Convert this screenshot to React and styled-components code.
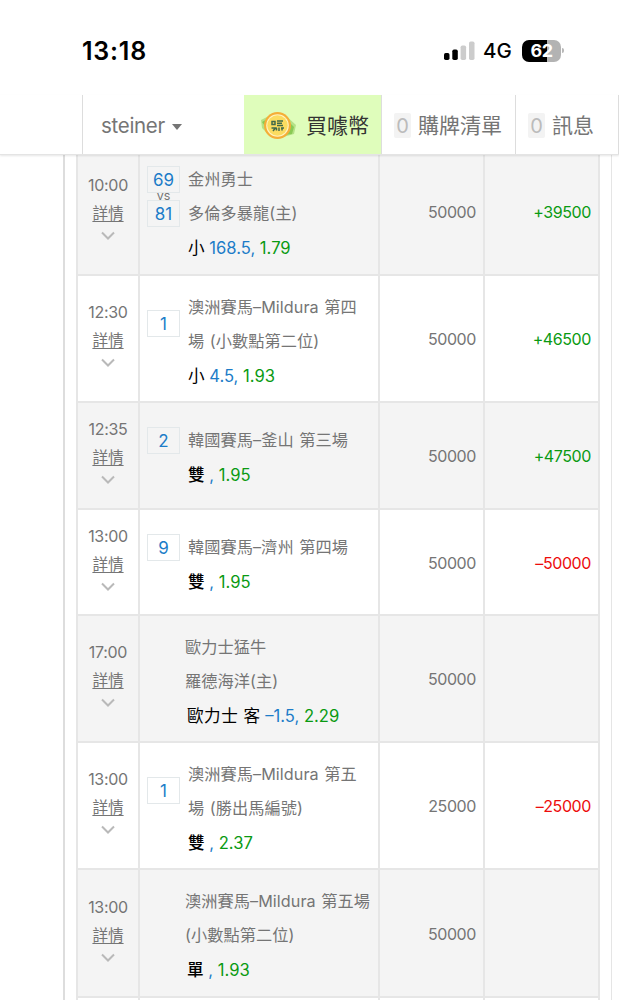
import React from "react";
import styled, { createGlobalStyle } from "styled-components";

const Global = createGlobalStyle`
  * { box-sizing: border-box; }
  body { margin: 0; background: #fff; overflow: hidden; }
`;

const Screen = styled.div`
  display: flex;
  flex-direction: column;
  width: 619px;
  height: 1000px;
  overflow: hidden;
  background: #fff;
  color: #757575;
  font-family: Inter, "Noto Sans CJK TC", sans-serif;
  font-weight: 370;
`;

const StatusBar = styled.div`
  display: flex;
  flex: none;
  align-items: center;
  height: 95px;
  padding: 6px 55px 0 82px;
  color: #000;
`;

const Clock = styled.div`
  flex: 1;
  font-size: 25px;
  font-weight: 600;
  line-height: 30px;
  letter-spacing: 0.8px;
`;

const Signal = styled.svg`
  width: 31px;
  height: 20px;
  margin-right: 8px;
`;

const Network = styled.div`
  width: 39px;
  font-size: 20.5px;
  font-weight: 500;
  line-height: 30px;
`;

const Battery = styled.div`
  width: 39px;
  height: 22px;
  border-radius: 7px;
  background: linear-gradient(90deg, #000 64%, #b3b3b3 64%);
  color: #fff;
  font-size: 18px;
  font-weight: 700;
  line-height: 22px;
  text-align: center;
  letter-spacing: -0.5px;
`;

const BatteryCap = styled.div`
  width: 2px;
  height: 5px;
  margin-left: 1px;
  border-radius: 0 2px 2px 0;
  background: #b8b8b8;
`;

const Nav = styled.nav`
  position: relative;
  z-index: 1;
  display: flex;
  flex: none;
  height: 60px;
  padding-left: 82px;
  background: #fff;
  border-bottom: 1px solid #e4e4e4;
  box-shadow: 0 1px 2px rgba(0, 0, 0, 0.1);
  font-size: 21px;
`;

const NavItem = styled.div`
  display: flex;
  flex: none;
  align-items: center;
  width: ${(p) => p.$width}px;
  padding: 2px 0 0 ${(p) => p.$pad}px;
  border-left: ${(p) => (p.$highlight ? "0" : "1px solid #ddd")};
  background: ${(p) => (p.$highlight ? "#dffdbb" : "#fff")};
  color: ${(p) => (p.$highlight ? "#333" : "#757575")};
  line-height: 30px;
  white-space: nowrap;
`;

const User = styled.span`
  font-size: 20.5px;
  letter-spacing: -0.3px;
`;

const Caret = styled.span`
  margin: 2px 0 0 7px;
  border: 5.5px solid transparent;
  border-top: 6px solid #757575;
  border-bottom: 0;
`;

const Coin = styled.svg`
  width: 38px;
  height: 34px;
  margin-right: 9px;
`;

const Count = styled.span`
  width: 17px;
  height: 25px;
  margin-right: 7px;
  border-radius: 2px;
  background: #f3f3f3;
  color: #bbb;
  font-size: 20px;
  line-height: 27px;
  text-align: center;
`;

const NavEdge = styled.div`
  width: 1px;
  margin-left: auto;
  background: #ddd;
`;

const Page = styled.main`
  flex: none;
  width: 549px;
  margin: -7px 0 0 63px;
  padding-left: 11px;
  border-left: 2px solid #ddd;
  border-right: 1px solid #e5e5e5;
`;

const Table = styled.div`
  width: 524px;
  border-left: 2px solid #e6e6e6;
`;

const Row = styled.div`
  display: grid;
  grid-template-columns: 62px 240px 105px 115px;
  height: ${(p) => p.$height}px;
  background: ${(p) => (p.$shaded ? "#f4f4f4" : "#fff")};
`;

const Cell = styled.div`
  min-width: 0;
  border-right: 2px solid #e6e6e6;
  border-bottom: 2px solid #e6e6e6;
  font-size: 16.2px;
`;

const TimeCell = styled(Cell)`
  display: flex;
  flex-direction: column;
  align-items: center;
  justify-content: center;
  padding-bottom: 10px;
`;

const Time = styled.div`
  height: 28px;
  font-size: 16px;
  line-height: 28px;
  letter-spacing: -0.3px;
`;

const Details = styled.a`
  height: 29px;
  font-size: 15.6px;
  line-height: 29px;
  text-decoration: underline;
  text-decoration-thickness: 1px;
  text-underline-offset: 2px;
`;

const Chevron = styled.svg`
  width: 14px;
  height: 9px;
  margin: 3px 0 2px;
`;

const EventCell = styled(Cell)`
  display: grid;
  grid-template-columns: ${(p) => (p.$scored ? "33px 1fr" : "1fr")};
  column-gap: 8px;
  align-content: start;
  padding: ${(p) => (p.$short ? 20 : 14)}px 0 0 ${(p) => (p.$scored ? 7 : 45)}px;
`;

const Scores = styled.div`
  display: flex;
  flex-direction: column;
  align-items: center;
  padding-top: ${(p) => p.$top}px;
`;

const Score = styled.div`
  width: 33px;
  height: 27px;
  border: 1px solid #e3e8ea;
  color: #1c7cc8;
  font-size: 17px;
  line-height: 26px;
  text-align: center;
`;

const Versus = styled.div`
  height: 7px;
  font-size: 12.5px;
  line-height: 6px;
`;

const Line = styled.div`
  height: 34px;
  font-size: 16.2px;
  line-height: 34px;
  word-spacing: 1px;
  letter-spacing: 0.06px;
  white-space: nowrap;
`;

const Bet = styled.div`
  height: 36px;
  margin-left: ${(p) => (p.$indent ? 2 : 0)}px;
  color: #0a9a12;
  font-size: 16.6px;
  line-height: 36px;
  white-space: pre;
`;

const Pick = styled.span`
  color: #000;
  font-weight: ${(p) => (p.$strong ? 500 : 370)};
  letter-spacing: ${(p) => (p.$wide ? 0.5 : 0)}px;
`;

const Handicap = styled.span`
  color: #1c7cc8;
`;

const MoneyCell = styled(Cell)`
  display: flex;
  align-items: center;
  justify-content: flex-end;
  padding: 1px 7px 0 0;
  color: ${(p) => p.$color || "#757575"};
  font-size: 16px;
  letter-spacing: -0.4px;
`;

const rows = [
  { h: 128, time: "10:00", scores: ["69", "81"], lines: ["金州勇士", "多倫多暴龍(主)"], pick: "小", line: " 168.5,", odds: "1.79", stake: "50000", result: "+39500" },
  { h: 127, time: "12:30", scores: ["1"], lines: ["澳洲賽馬–Mildura 第四", "場 (小數點第二位)"], pick: "小", line: " 4.5,", odds: "1.93", stake: "50000", result: "+46500" },
  { h: 107, time: "12:35", scores: ["2"], lines: ["韓國賽馬–釜山 第三場"], pick: "雙", strong: true, line: " ,", odds: "1.95", stake: "50000", result: "+47500" },
  { h: 106, time: "13:00", scores: ["9"], lines: ["韓國賽馬–濟州 第四場"], pick: "雙", strong: true, line: " ,", odds: "1.95", stake: "50000", result: "–50000" },
  { h: 127, time: "17:00", lines: ["歐力士猛牛", "羅德海洋(主)"], pick: "歐力士 客", line: " –1.5,", odds: "2.29", stake: "50000" },
  { h: 127, time: "13:00", scores: ["1"], lines: ["澳洲賽馬–Mildura 第五", "場 (勝出馬編號)"], pick: "雙", strong: true, line: " ,", odds: "2.37", stake: "25000", result: "–25000" },
  { h: 128, time: "13:00", lines: ["澳洲賽馬–Mildura 第五場", "(小數點第二位)"], pick: "單", strong: true, line: " ,", odds: "1.93", stake: "50000" },
  { h: 127 },
];

function ScoreColumn({ scores, short }) {
  if (scores.length === 2) {
    return (
      <Scores $top={4}>
        <Score>{scores[0]}</Score>
        <Versus>vs</Versus>
        <Score>{scores[1]}</Score>
      </Scores>
    );
  }
  return (
    <Scores $top={short ? 4 : 20}>
      <Score>{scores[0]}</Score>
    </Scores>
  );
}

function BetRow({ data, shaded }) {
  if (!data.time) {
    return <Row $height={data.h} $shaded={shaded}><Cell /><Cell /><Cell /><Cell /></Row>;
  }
  const short = data.lines.length === 1;
  const scored = !!data.scores;
  const won = data.result && data.result[0] === "+";
  return (
    <Row $height={data.h} $shaded={shaded}>
      <TimeCell>
        <Time>{data.time}</Time>
        <Details>詳情</Details>
        <Chevron viewBox="0 0 14 9" fill="none" stroke="#b9b9b9" strokeWidth="2">
          <path d="M1 1.5 7 7.5l6-6" />
        </Chevron>
      </TimeCell>
      <EventCell $scored={scored} $short={short}>
        {scored && <ScoreColumn scores={data.scores} short={short} />}
        <div>
          {data.lines.map((text) => <Line key={text}>{text}</Line>)}
          <Bet $indent={!scored}>
            <Pick $strong={data.strong} $wide={data.pick.length > 1}>{data.pick}</Pick>
            <Handicap>{data.line}</Handicap> {data.odds}
          </Bet>
        </div>
      </EventCell>
      <MoneyCell>{data.stake}</MoneyCell>
      <MoneyCell $color={won ? "#0a9a12" : "#ed0c0c"}>{data.result}</MoneyCell>
    </Row>
  );
}

export default function App() {
  return (
    <Screen>
      <Global />
      <StatusBar>
        <Clock>13:18</Clock>
        <Signal viewBox="0 0 31 20">
          <rect x="0" y="12" width="5.5" height="7" rx="1.7" fill="#000" />
          <rect x="8.3" y="8.5" width="5.5" height="10.5" rx="1.7" fill="#000" />
          <rect x="16.6" y="4.5" width="5.5" height="14.5" rx="1.7" fill="#ccc" />
          <rect x="25" y="0.5" width="5.5" height="18.5" rx="1.7" fill="#ccc" />
        </Signal>
        <Network>4G</Network>
        <Battery>62</Battery>
        <BatteryCap />
      </StatusBar>
      <Nav>
        <NavItem $width={162} $pad={18}>
          <User>steiner</User>
          <Caret />
        </NavItem>
        <NavItem $width={137} $pad={15} $highlight>
          <Coin viewBox="0 0 38 34">
            <path d="M2 11 12 6l14 0 11 10-2 9-11 3-13-1-8-8z" fill="#b4e286" />
            <path d="m3 13 9-5-3 13zM27 10l8 8-2 7-8 1z" fill="#8aca54" />
            <circle cx="18.5" cy="16.5" r="13.5" fill="#f5ae38" />
            <circle cx="18.5" cy="16.5" r="11.3" fill="#fff3c0" />
            <circle cx="18.5" cy="16.5" r="10.2" fill="#fbdc60" />
            <path d="M13 12.5h3v3h-3zM18 12h6M18 14.3h5M18 16.5h6M12.5 19h4l-2.5 3M17.5 19v2.5M20 18.5v3.5M22 19h3M23 19v2.5" fill="none" stroke="#41694a" strokeWidth="1.5" />
          </Coin>
          買噱幣
        </NavItem>
        <NavItem $width={134} $pad={12}>
          <Count>0</Count>購牌清單
        </NavItem>
        <NavItem $width={103} $pad={12}>
          <Count>0</Count>訊息
        </NavItem>
        <NavEdge />
      </Nav>
      <Page>
        <Table>
          {rows.map((row, i) => <BetRow key={i} data={row} shaded={i % 2 === 0 && row.time !== undefined} />)}
        </Table>
      </Page>
    </Screen>
  );
}
